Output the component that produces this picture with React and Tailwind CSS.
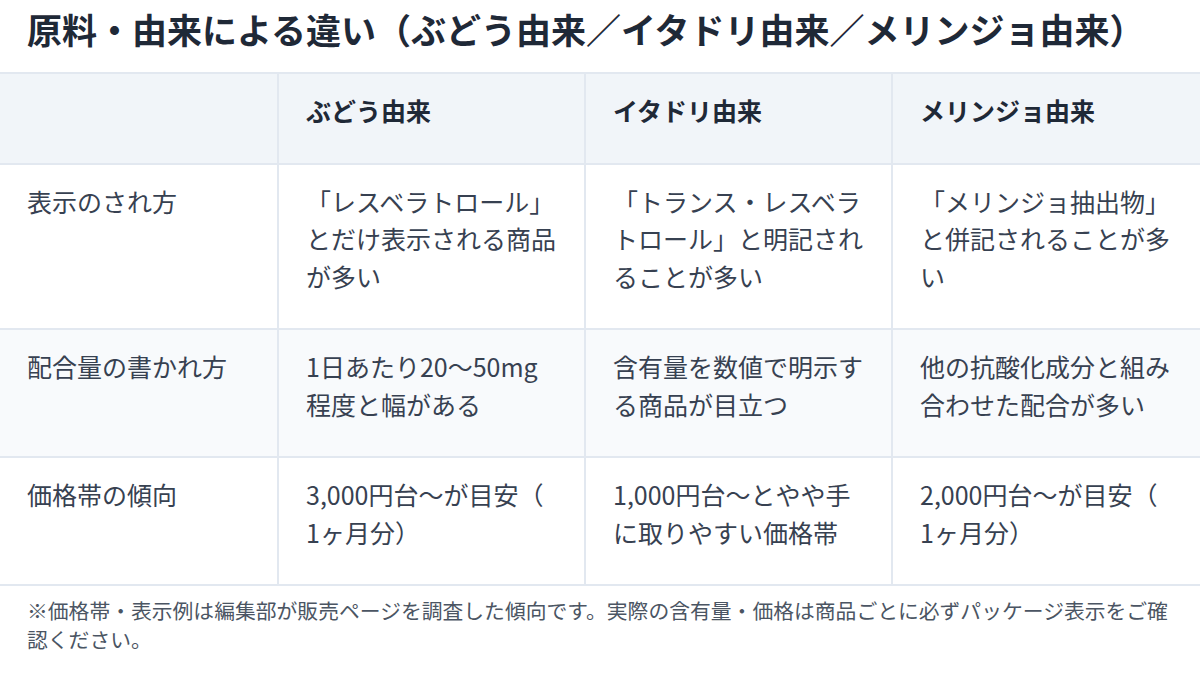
import React from "react";

const rows = [
  {
    label: "表示のされ方",
    cells: [
      "「レスベラトロール」とだけ表示される商品が多い",
      "「トランス・レスベラトロール」と明記されることが多い",
      "「メリンジョ抽出物」と併記されることが多い",
    ],
    bg: "bg-white",
  },
  {
    label: "配合量の書かれ方",
    cells: [
      "1日あたり20〜50mg\n程度と幅がある",
      "含有量を数値で明示する商品が目立つ",
      "他の抗酸化成分と組み合わせた配合が多い",
    ],
    bg: "bg-[#f8fafc]",
  },
  {
    label: "価格帯の傾向",
    cells: [
      "3,000円台〜が目安（\n1ヶ月分）",
      "1,000円台〜とやや手に取りやすい価格帯",
      "2,000円台〜が目安（\n1ヶ月分）",
    ],
    bg: "bg-white",
  },
];

const heads = ["ぶどう由来", "イタドリ由来", "メリンジョ由来"];

export default function App() {
  return (
    <div
      className="w-[1200px] h-[684px] overflow-hidden bg-white"
      style={{ fontFamily: '"Noto Sans CJK JP", "Noto Sans", sans-serif' }}
    >
      <h2 className="px-[27px] pt-[6px] text-[35px] leading-[46px] font-bold text-[#1f2937] whitespace-nowrap">
        原料・由来による違い（ぶどう由来／イタドリ由来／メリンジョ由来）
      </h2>
      <div className="mt-[20px] w-[1200px] overflow-hidden">
        <table className="w-[1212px] border-collapse table-fixed text-[25px] leading-[37.5px] text-[#374151]">
          <colgroup>
            <col className="w-[278px]" />
            <col className="w-[307px]" />
            <col className="w-[307px]" />
            <col className="w-[320px]" />
          </colgroup>
          <thead>
            <tr className="bg-[#f1f5f9] border-y-2 border-[#e2e8f0]">
              <th className="border-r-2 border-[#e2e8f0]"></th>
              {heads.map((h) => (
                <th
                  key={h}
                  className="text-left align-top font-semibold text-[#1f2937] pl-[27px] pr-[14px] pt-[18px] pb-[33px] border-r-2 border-[#e2e8f0]"
                >
                  {h}
                </th>
              ))}
            </tr>
          </thead>
          <tbody>
            {rows.map((r) => (
              <tr key={r.label} className={`${r.bg} border-b-2 border-[#e2e8f0]`}>
                <td className="align-top pl-[27px] pr-[14px] pt-[18px] pb-[33px] border-r-2 border-[#e2e8f0]">
                  {r.label}
                </td>
                {r.cells.map((c, i) => (
                  <td
                    key={i}
                    className="align-top whitespace-pre-line pl-[27px] pr-[18px] pt-[18px] pb-[33px] border-r-2 border-[#e2e8f0]"
                  >
                    {c}
                  </td>
                ))}
              </tr>
            ))}
          </tbody>
        </table>
      </div>
      <p className="px-[27px] pt-[10px] text-[20.8px] leading-[29px] text-[#4b5563]">
        ※価格帯・表示例は編集部が販売ページを調査した傾向です。実際の含有量・価格は商品ごとに必ずパッケージ表示をご確認ください。
      </p>
    </div>
  );
}
